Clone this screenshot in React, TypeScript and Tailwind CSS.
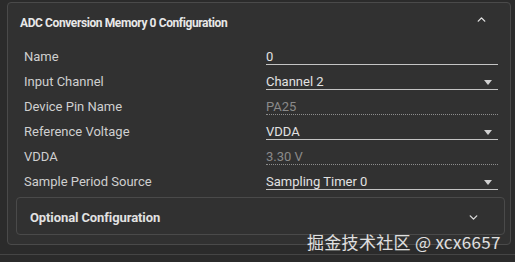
import { ChevronDown, ChevronUp } from "lucide-react";

type Row = {
  label: string;
  value: string;
  kind: "text" | "select" | "readonly";
};

const rows: Row[] = [
  { label: "Name", value: "0", kind: "text" },
  { label: "Input Channel", value: "Channel 2", kind: "select" },
  { label: "Device Pin Name", value: "PA25", kind: "readonly" },
  { label: "Reference Voltage", value: "VDDA", kind: "select" },
  { label: "VDDA", value: "3.30 V", kind: "readonly" },
  { label: "Sample Period Source", value: "Sampling Timer 0", kind: "select" },
];

function Field({ row }: { row: Row }) {
  const readonly = row.kind === "readonly";
  return (
    <div
      className={`w-[232px] flex items-end justify-between border-b ${
        readonly
          ? "border-dotted border-[#8c8c8c] text-[#8a8a8a]"
          : "border-[#c4c4c4] text-[#e2e2e2]"
      }`}
    >
      <span className="leading-[14px]">{row.value}</span>
      {row.kind === "select" && (
        <span className="mr-[6px] mb-[4px] w-0 h-0 border-l-[4px] border-r-[4px] border-t-[5px] border-l-transparent border-r-transparent border-t-[#d0d0d0]" />
      )}
    </div>
  );
}

export default function App() {
  return (
    <div
      className="relative w-[515px] h-[262px] bg-[#2b2b2b] overflow-hidden"
      style={{ fontFamily: "Roboto, 'Noto Sans', sans-serif" }}
    >
      <div className="pt-[2px] pl-[7px] pr-[4px]">
        <div className="bg-[#313131] border border-[#4a4a4a] rounded-[4px] h-[243px]">
          <div className="flex justify-between pl-3 pr-[22px] pt-[12px] pb-[9px]">
            <span className="text-[12px] leading-[16px] font-bold tracking-[-0.4px] text-[#e8e8e8]">
              ADC Conversion Memory 0 Configuration
            </span>
            <ChevronUp size={13} strokeWidth={2.6} className="text-[#e0e0e0] mt-[-2px]" />
          </div>

          <div className="pl-4 pr-3 text-[13px]">
            {rows.map((row) => (
              <div key={row.label} className="h-[25px] flex items-end">
                <span className="flex-1 leading-[14px] pb-[1px] text-[#cfcfcf]">{row.label}</span>
                <Field row={row} />
              </div>
            ))}
          </div>

          <div className="mt-[7px] ml-[8px] mr-[5px] h-[38px] pt-[3px] border border-[#4a4a4a] rounded-[4px] flex items-center justify-between pl-[13px] pr-[24px]">
            <span className="text-[13px] leading-[16px] font-bold tracking-[-0.1px] text-[#e2e2e2]">
              Optional Configuration
            </span>
            <ChevronDown size={13} strokeWidth={2.6} className="text-[#d8d8d8]" />
          </div>
        </div>
      </div>

      <div className="mt-[9px] border-t border-[#454545]" />

      <div
        className="absolute left-[307px] top-[230px] text-[17px] leading-[24px] tracking-[0.3px] text-white/85"
        style={{ fontFamily: "'Noto Sans CJK SC', 'Noto Sans', sans-serif" }}
      >
        掘金技术社区 @ xcx6657
      </div>
    </div>
  );
}
